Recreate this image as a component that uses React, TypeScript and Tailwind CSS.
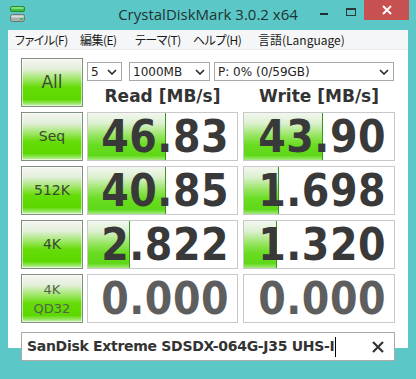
import React from "react";

const BTN_BG =
  "bg-[linear-gradient(to_bottom,#f4f5f2_0%,#e2efd9_22%,#98e65c_45%,#66dc08_60%,#5cd800_86%,#9ce86c_95%,#cdf2b6_100%)]";
const BAR_BG =
  "bg-[linear-gradient(to_bottom,#f3f7f0_0%,#dcf0cf_22%,#96e560_48%,#6adc22_68%,#5ed816_90%,#a4eb7e_100%)]";

type Cell = { value: string; bar: number; zero?: boolean };

const rows: { label: React.ReactNode; small?: boolean; read: Cell; write: Cell }[] = [
  { label: "Seq", read: { value: "46.83", bar: 78 }, write: { value: "43.90", bar: 79 } },
  { label: "512K", read: { value: "40.85", bar: 78 }, write: { value: "1.698", bar: 35 } },
  { label: "4K", read: { value: "2.822", bar: 42 }, write: { value: "1.320", bar: 33 } },
  {
    label: (
      <>
        4K
        <br />
        QD32
      </>
    ),
    small: true,
    read: { value: "0.000", bar: 0, zero: true },
    write: { value: "0.000", bar: 0, zero: true },
  },
];

function Chevron() {
  return (
    <svg width="10" height="6" viewBox="0 0 10 6" className="shrink-0">
      <path d="M1 1 L5 5 L9 1" fill="none" stroke="#222" strokeWidth="1.5" />
    </svg>
  );
}

function Select({ text, className }: { text: string; className: string }) {
  return (
    <div
      className={`h-[19px] flex items-center justify-between border border-[#a9a9a9] bg-white pl-[3px] pr-[4px] text-[12px] text-[#1e1e1e] font-['DejaVu_Sans',sans-serif] ${className}`}
    >
      <span className="leading-none">{text}</span>
      <Chevron />
    </div>
  );
}

function TestButton({ children, small, big }: { children: React.ReactNode; small?: boolean; big?: boolean }) {
  return (
    <div
      className={`w-[62px] h-[49px] shrink-0 border border-[#7f8f7d] ${BTN_BG} shadow-[inset_0_0_0_1px_rgba(255,255,255,0.55)] flex items-center justify-center text-center font-['DejaVu_Sans',sans-serif] ${
        big ? "text-[17px] text-[#3d4d33]" : small ? "text-[13px] leading-[19px] text-[#55634c]" : "text-[14px] text-[#3a4830]"
      }`}
    >
      {children}
    </div>
  );
}

function ValueCell({ cell, className }: { cell: Cell; className: string }) {
  return (
    <div className={`relative h-[49px] border border-[#c9c9c9] bg-white flex items-center justify-end pr-[8px] ${className}`}>
      {cell.bar > 0 && (
        <div
          className={`absolute left-0 top-0 bottom-0 ${BAR_BG} border-r border-[#3f9320]`}
          style={{ width: cell.bar }}
        />
      )}
      <span
        className={`relative leading-none font-bold text-[44px] tracking-[0.5px] font-['DejaVu_Sans_Condensed','DejaVu_Sans',sans-serif] ${
          cell.zero ? "text-[#5e5e5e]" : "text-[#393939]"
        }`}
      >
        {cell.value}
      </span>
    </div>
  );
}

export default function App() {
  return (
    <div className="w-[416px] h-[379px] bg-[#5cc7c7] flex flex-col overflow-hidden">
      {/* title bar */}
      <div className="h-[30px] shrink-0 grid grid-cols-[96px_1fr_96px]">
        <div className="pl-[10px] pt-[6px]">
          <svg width="16" height="17" viewBox="0 0 16 17">
            <rect x="0.5" y="0.5" width="14" height="5" rx="1.5" fill="#3fc03f" stroke="#2a8a2a" />
            <rect x="1.5" y="1.2" width="12" height="1.6" fill="#8fe88f" />
            <rect x="0.5" y="8.5" width="14" height="7" rx="2" fill="#a9b0b0" stroke="#6e7676" />
            <rect x="1.5" y="9.5" width="12" height="2" fill="#d8dddd" />
            <rect x="10" y="12" width="3" height="2" fill="#3fc03f" />
          </svg>
        </div>
        <div className="flex items-start justify-center pt-[4px]">
          <span className="text-[15px] leading-[20px] text-[#1f3333] font-['Open_Sans',sans-serif]">
            CrystalDiskMark 3.0.2 x64
          </span>
        </div>
        <div className="flex items-start">
          <div className="w-[26px] h-[20px] flex items-start pt-[13px]">
            <div className="w-[8px] h-[2px] bg-[#1f2f2f]" />
          </div>
          <div className="w-[18px] h-[20px] pt-[8px]">
            <div className="w-[10px] h-[8px] border border-[#2a3a3a] border-t-2" />
          </div>
          <div className="w-[45px] h-[20px] bg-[#c75050] flex items-center justify-center">
            <svg width="10" height="10" viewBox="0 0 10 10">
              <path d="M1 1 L9 9 M9 1 L1 9" stroke="#fff" strokeWidth="2" />
            </svg>
          </div>
        </div>
      </div>

      {/* client */}
      <div className="mx-[8px] h-[318px] flex flex-col bg-white">
        <div className="h-[20px] shrink-0 bg-[#f5f6f7] border-b border-[#e8eaec] flex items-center pl-[7px] text-[12px] tracking-[-0.5px] text-[#1a1a1a] font-['Noto_Sans_CJK_JP',sans-serif] [font-feature-settings:'palt'] whitespace-nowrap">
          <span className="w-[65px]">ファイル(F)</span>
          <span className="w-[55px]">編集(E)</span>
          <span className="w-[58px]">テーマ(T)</span>
          <span className="w-[65px]">ヘルプ(H)</span>
          <span className="tracking-[0px]">言語(Language)</span>
        </div>

        <div className="flex flex-col pl-[13px] pt-[8px]">
          {/* top row */}
          <div className="flex h-[49px]">
            <TestButton big>All</TestButton>
            <div className="ml-[4px] flex flex-col">
              <div className="flex mt-[4px]">
                <Select text="5" className="w-[35px]" />
                <Select text="1000MB" className="w-[81px] ml-[7px]" />
                <Select text="P: 0% (0/59GB)" className="w-[180px] ml-[4px]" />
              </div>
              <div className="flex mt-[4px] text-[17px] font-bold text-[#333] font-['DejaVu_Sans',sans-serif] leading-[22px]">
                <div className="w-[151px] text-center">Read [MB/s]</div>
                <div className="w-[152px] ml-[5px] text-center">Write [MB/s]</div>
              </div>
            </div>
          </div>

          {rows.map((r, i) => (
            <div key={i} className="flex mt-[5px]">
              <TestButton small={r.small}>{r.label}</TestButton>
              <ValueCell cell={r.read} className="w-[151px] ml-[4px]" />
              <ValueCell cell={r.write} className="w-[152px] ml-[5px]" />
            </div>
          ))}

          {/* comment box */}
          <div className="mt-[9px] w-[374px] h-[29px] border border-[#ababab] bg-white flex items-center pl-[5px] pr-[10px]">
            <span className="text-[14px] font-bold text-[#333] font-['DejaVu_Sans',sans-serif] tracking-[-0.3px]">
              SanDisk Extreme SDSDX-064G-J35 UHS-I
            </span>
            <span className="w-px h-[20px] bg-black ml-[1px]" />
            <svg width="12" height="12" viewBox="0 0 12 12" className="ml-auto">
              <path d="M1 1 L11 11 M11 1 L1 11" stroke="#333" strokeWidth="2.2" />
            </svg>
          </div>
        </div>
      </div>
    </div>
  );
}
